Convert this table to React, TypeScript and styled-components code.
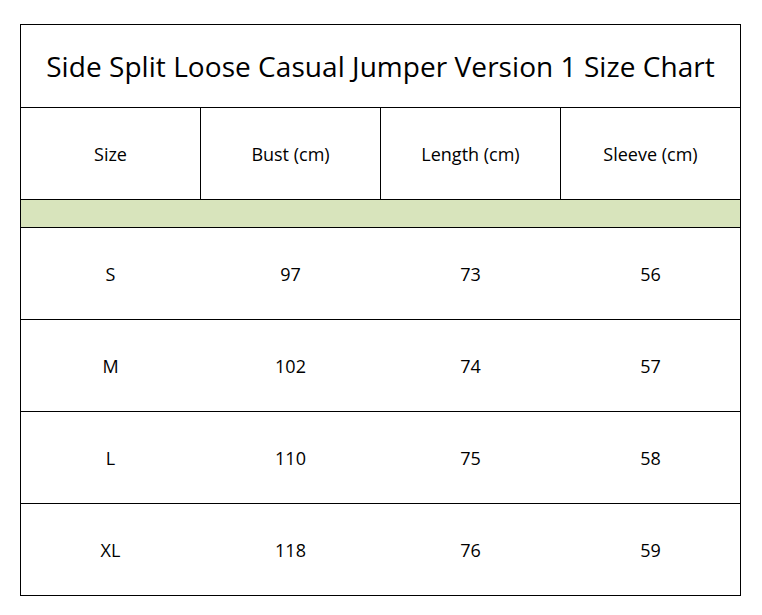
import React from "react";
import styled, { createGlobalStyle } from "styled-components";

const Global = createGlobalStyle`
  html, body { margin: 0; padding: 0; background: #ffffff; }
  body { font-family: "Open Sans", "Noto Sans", sans-serif; color: #000; }
`;

const Page = styled.div`
  padding: 24px 0 0 20px;
`;

const Chart = styled.div`
  display: grid;
  grid-template-columns: repeat(4, 179px);
  grid-template-rows: 82px 91px 27px repeat(4, 91px);
  gap: 1px;
  padding: 1px;
  background: #000;
  width: max-content;
`;

const Title = styled.div`
  grid-column: 1 / -1;
  background: #fff;
  display: flex;
  align-items: center;
  justify-content: center;
  font-size: 28px;
  letter-spacing: 0.05px;
`;

const HeadCell = styled.div`
  background: #fff;
  display: flex;
  align-items: center;
  justify-content: center;
  font-size: 18px;
`;

const Band = styled.div`
  grid-column: 1 / -1;
  background: #d8e4bc;
`;

const DataRow = styled.div`
  grid-column: 1 / -1;
  background: #fff;
  display: grid;
  grid-template-columns: repeat(4, 1fr);
  column-gap: 1px;
`;

const DataCell = styled.div`
  display: flex;
  align-items: center;
  justify-content: center;
  font-size: 18px;
`;

const headers = ["Size", "Bust (cm)", "Length (cm)", "Sleeve (cm)"];
const rows = [
  ["S", "97", "73", "56"],
  ["M", "102", "74", "57"],
  ["L", "110", "75", "58"],
  ["XL", "118", "76", "59"],
];

export default function App() {
  return (
    <>
      <Global />
      <Page>
        <Chart>
          <Title>Side Split Loose Casual Jumper Version 1 Size Chart</Title>
          {headers.map((h) => (
            <HeadCell key={h}>{h}</HeadCell>
          ))}
          <Band />
          {rows.map((r) => (
            <DataRow key={r[0]}>
              {r.map((v, i) => (
                <DataCell key={i}>{v}</DataCell>
              ))}
            </DataRow>
          ))}
        </Chart>
      </Page>
    </>
  );
}
